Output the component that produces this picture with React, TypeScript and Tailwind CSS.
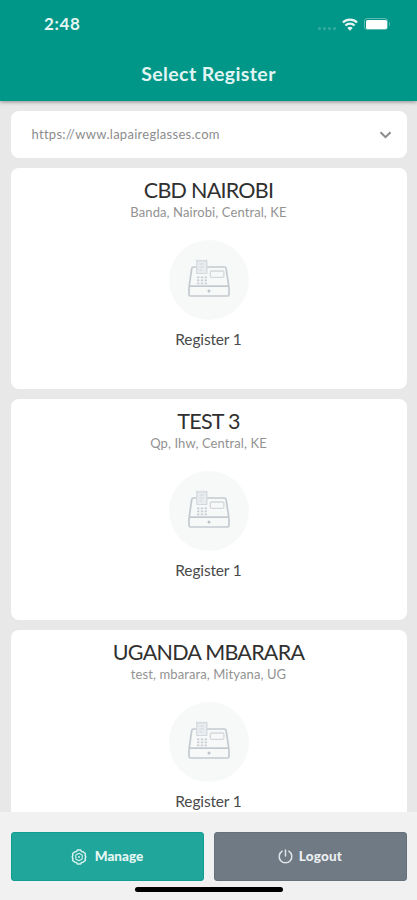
import React from "react";

interface RegisterCardProps {
  name: string;
  address: string;
  register: string;
}

const stores: RegisterCardProps[] = [
  { name: "CBD NAIROBI", address: "Banda, Nairobi, Central, KE", register: "Register 1" },
  { name: "TEST 3", address: "Qp, Ihw, Central, KE", register: "Register 1" },
  { name: "UGANDA MBARARA", address: "test, mbarara, Mityana, UG", register: "Register 1" },
];

const RegisterIcon = () => (
  <svg width="42" height="38" viewBox="0 0 42 38" fill="none" stroke="#c3cacf" strokeWidth="1.7" strokeLinejoin="round">
    <path d="M8.5 8H5.6a1.9 1.9 0 0 0-1.9 1.7L1.2 27.2M19 8h17.2a1.9 1.9 0 0 1 1.9 1.7l2.7 17.5" />
    <rect x="1" y="27.2" width="40" height="9.8" rx="1.5" />
    <path d="M8.8 14.5V1.2l1.6 1 1.7-1 1.7 1 1.7-1 1.6 1 1.7-1v13.3z" fill="#eaedef" stroke="#d3d8dc" strokeWidth="1.2" />
    <path d="M11.5 5h4.5M11.5 8h4.5M11.5 11h3" stroke="#d3d8dc" strokeWidth="1" />
    <rect x="22.3" y="12" width="13.6" height="6.4" rx="1.5" stroke="#d3d8dc" strokeWidth="1.3" />
    <path d="M9 18.4h10M9 21.4h10M9 24.4h10" stroke="#c9cfd4" strokeWidth="1.9" strokeDasharray="2.4 1.4" />
    <circle cx="21" cy="32" r="1.5" fill="#bcc3c9" stroke="none" />
  </svg>
);

const WifiIcon = () => (
  <svg width="16" height="13" viewBox="0 0 16 13" fill="none" stroke="#e6f5f3" strokeWidth="2.2">
    <path d="M.9 4.6a10 10 0 0 1 14.2 0" />
    <path d="M3.4 7.5a6.4 6.4 0 0 1 9.2 0" />
    <path d="M8 12.8 5.3 9.9a3.7 3.7 0 0 1 5.4 0z" fill="#e6f5f3" stroke="none" />
  </svg>
);

const ManageIcon = () => (
  <svg width="16" height="16" viewBox="0 0 16 16" fill="none" stroke="#d5f0ed" strokeWidth="1.5" strokeLinejoin="round">
    <path d="M6.3 1.1h3.4l.7 1.4 1.7.3 2.3 1.7-.3 1.9.7 1.6-.7 1.6.3 1.9-2.3 1.7-1.7.3-.7 1.4H6.3l-.7-1.4-1.7-.3-2.3-1.7.3-1.9L1.2 8l.7-1.6-.3-1.9 2.3-1.7 1.7-.3z" />
    <path d="M8 4.3 11.2 6.1v3.8L8 11.7 4.8 9.9V6.1z" strokeWidth="1.1" />
    <circle cx="8" cy="8" r="1" fill="#d5f0ed" stroke="none" />
  </svg>
);

const LogoutIcon = () => (
  <svg width="15" height="15" viewBox="0 0 15 15" fill="none" stroke="#e0e4e8" strokeWidth="1.5" strokeLinecap="round">
    <path d="M7.5 1v6" />
    <path d="M4.2 2.2a6.3 6.3 0 1 0 6.6 0" />
  </svg>
);

const RegisterCard: React.FC<RegisterCardProps> = ({ name, address, register }) => (
  <div className="flex h-[221px] shrink-0 flex-col items-center rounded-lg bg-white pt-[9px]">
    <h2 className="text-[21.5px] leading-[26px] tracking-[-0.75px] whitespace-nowrap text-[#303030]">
      {name}
    </h2>
    <p className="mt-px text-[13px] leading-4 tracking-[0.1px] whitespace-nowrap text-[#929292]">
      {address}
    </p>
    <div className="mt-5 flex size-20 items-center justify-center rounded-full bg-[#f7f8f8] pb-1">
      <RegisterIcon />
    </div>
    <p className="mt-[9px] text-[15.5px] leading-5 tracking-[-0.15px] whitespace-nowrap text-[#4a4a4a]">
      {register}
    </p>
  </div>
);

const App: React.FC = () => {
  return (
    <div className="relative flex h-[900px] w-[417px] flex-col overflow-hidden bg-[#e8e8e8] font-['Lato','Liberation_Sans',sans-serif]">
      <header className="z-10 h-[101px] shrink-0 bg-[#009788] shadow-[0_1px_4px_rgba(0,0,0,0.4)]">
        <div className="flex h-12 items-center justify-between pr-[27px] pl-11 text-[#e6f5f3]">
          <span className="text-[17px] leading-5 font-bold tracking-[0.6px]">2:48</span>
          <div className="flex items-center">
            <div className="mt-[9px] mr-[6px] flex gap-[2px]">
              <i className="h-[3px] w-[3px] rounded-full bg-[#38aca0]" />
              <i className="h-[3px] w-[3px] rounded-full bg-[#38aca0]" />
              <i className="h-[3px] w-[3px] rounded-full bg-[#38aca0]" />
              <i className="h-[3px] w-[3px] rounded-full bg-[#38aca0]" />
            </div>
            <WifiIcon />
            <div className="ml-[6px] flex h-3 w-6 items-center justify-center rounded-[3px] border border-[#5cbcb2]">
              <div className="h-[9px] w-[21px] rounded-[1.5px] bg-white" />
            </div>
            <i className="ml-px h-1 w-px rounded-r bg-[#5cbcb2]" />
          </div>
        </div>
        <h1 className="mt-[13px] text-center text-[19.5px] leading-[26px] font-bold tracking-[0.4px] text-[#e0f5f3]">
          Select Register
        </h1>
      </header>

      <main className="flex h-[711px] shrink-0 flex-col gap-[10px] overflow-hidden px-[10.5px] pt-[10px]">
        <button className="flex h-[47px] shrink-0 items-center justify-between rounded-lg bg-white pr-[15px] pl-[21px]">
          <span className="text-[13px] tracking-[0.28px] text-[#8c8c8c]">https://www.lapaireglasses.com</span>
          <svg width="13" height="8" viewBox="0 0 13 8" fill="none" stroke="#8a8a8a" strokeWidth="2">
            <path d="m1.5 1.2 5 5 5-5" />
          </svg>
        </button>
        {stores.map((store) => (
          <RegisterCard key={store.name} {...store} />
        ))}
      </main>

      <footer className="flex h-[88px] shrink-0 flex-col items-center bg-[#f1f1f1] px-[10.5px] pt-5">
        <div className="flex w-full gap-[10px]">
          <button className="flex h-[49px] flex-1 items-center justify-center gap-2 rounded-[3px] border border-[#0f9e92] bg-[#20a69b] text-[13.5px] font-black text-[#e6f7f5]">
            <ManageIcon />
            <span>Manage</span>
          </button>
          <button className="flex h-[49px] flex-1 items-center justify-center gap-[6px] rounded-[3px] border border-[#65717b] bg-[#6f7a84] text-[13.5px] font-black tracking-[0.2px] text-[#eceff1]">
            <LogoutIcon />
            <span>Logout</span>
          </button>
        </div>
        <div className="mt-[6px] h-[5px] w-[148px] rounded-full bg-black" />
      </footer>
    </div>
  );
};

export default App;
